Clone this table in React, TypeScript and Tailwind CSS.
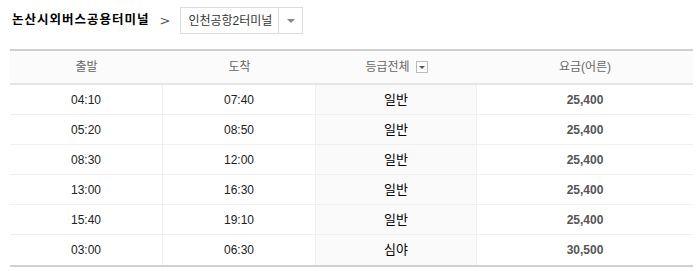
const ROWS = [
  { dep: "04:10", arr: "07:40", grade: "일반", fare: "25,400" },
  { dep: "05:20", arr: "08:50", grade: "일반", fare: "25,400" },
  { dep: "08:30", arr: "12:00", grade: "일반", fare: "25,400" },
  { dep: "13:00", arr: "16:30", grade: "일반", fare: "25,400" },
  { dep: "15:40", arr: "19:10", grade: "일반", fare: "25,400" },
  { dep: "03:00", arr: "06:30", grade: "심야", fare: "30,500" },
];

const font = "font-['Liberation_Sans','Noto_Sans_CJK_KR',sans-serif]";

export default function App() {
  return (
    <div className={`w-[700px] h-[271px] bg-white ${font}`}>
      <div className="flex items-center h-[49px] pb-[8px] pl-[12px]">
        <h2 className="text-[12.5px] font-bold text-black tracking-[1px]">
          논산시외버스공용터미널
        </h2>
        <span className="ml-[10px] text-[13px] text-[#555] font-['DejaVu_Sans',sans-serif]">
          &gt;
        </span>
        <div className="ml-[10px] flex h-[27px] w-[123px] border border-[#dcdcdc]">
          <span className="flex-1 flex items-center pl-[7px] text-[12px] text-[#333]">
            인천공항2터미널
          </span>
          <span className="w-[24px] border-l border-[#dcdcdc] flex items-center justify-center">
            <span className="w-0 h-0 border-l-[4px] border-r-[4px] border-t-[4px] border-l-transparent border-r-transparent border-t-[#888]" />
          </span>
        </div>
      </div>

      <div className="ml-[10px] w-[683px] border-t-2 border-[#cfcfcf]">
        <div className="grid grid-cols-[153px_153px_161px_216px] h-[34px] bg-[#fbfbfb] border-b-2 border-[#e6e6e6] text-[12px] text-[#666]">
          <div className="flex items-center justify-center">출발</div>
          <div className="flex items-center justify-center">도착</div>
          <div className="flex items-center justify-center gap-[6px]">
            <span>등급전체</span>
            <span className="w-[12px] h-[12px] border border-[#bbb] bg-white flex items-center justify-center">
              <span className="w-0 h-0 border-l-[3px] border-r-[3px] border-t-[3px] border-l-transparent border-r-transparent border-t-[#555]" />
            </span>
          </div>
          <div className="flex items-center justify-center">요금(어른)</div>
        </div>
        {ROWS.map((r, i) => (
          <div
            key={i}
            className={`grid grid-cols-[153px_153px_161px_216px] ${
              i < ROWS.length - 1
                ? "h-[30px] border-b border-[#f0f0f0]"
                : "h-[32px] border-b-2 border-[#d0d0d0]"
            }`}
          >
            <div className="flex items-center justify-center border-r border-[#f0f0f0] text-[12px] text-[#222]">
              {r.dep}
            </div>
            <div className="flex items-center justify-center border-r border-[#f0f0f0] text-[12px] text-[#222]">
              {r.arr}
            </div>
            <div className="flex items-center justify-center border-r border-[#f0f0f0] bg-[#fafafa] text-[13px] text-black">
              {r.grade}
            </div>
            <div className="flex items-center justify-center text-[12px] font-bold text-[#555]">
              {r.fare}
            </div>
          </div>
        ))}
      </div>
    </div>
  );
}
